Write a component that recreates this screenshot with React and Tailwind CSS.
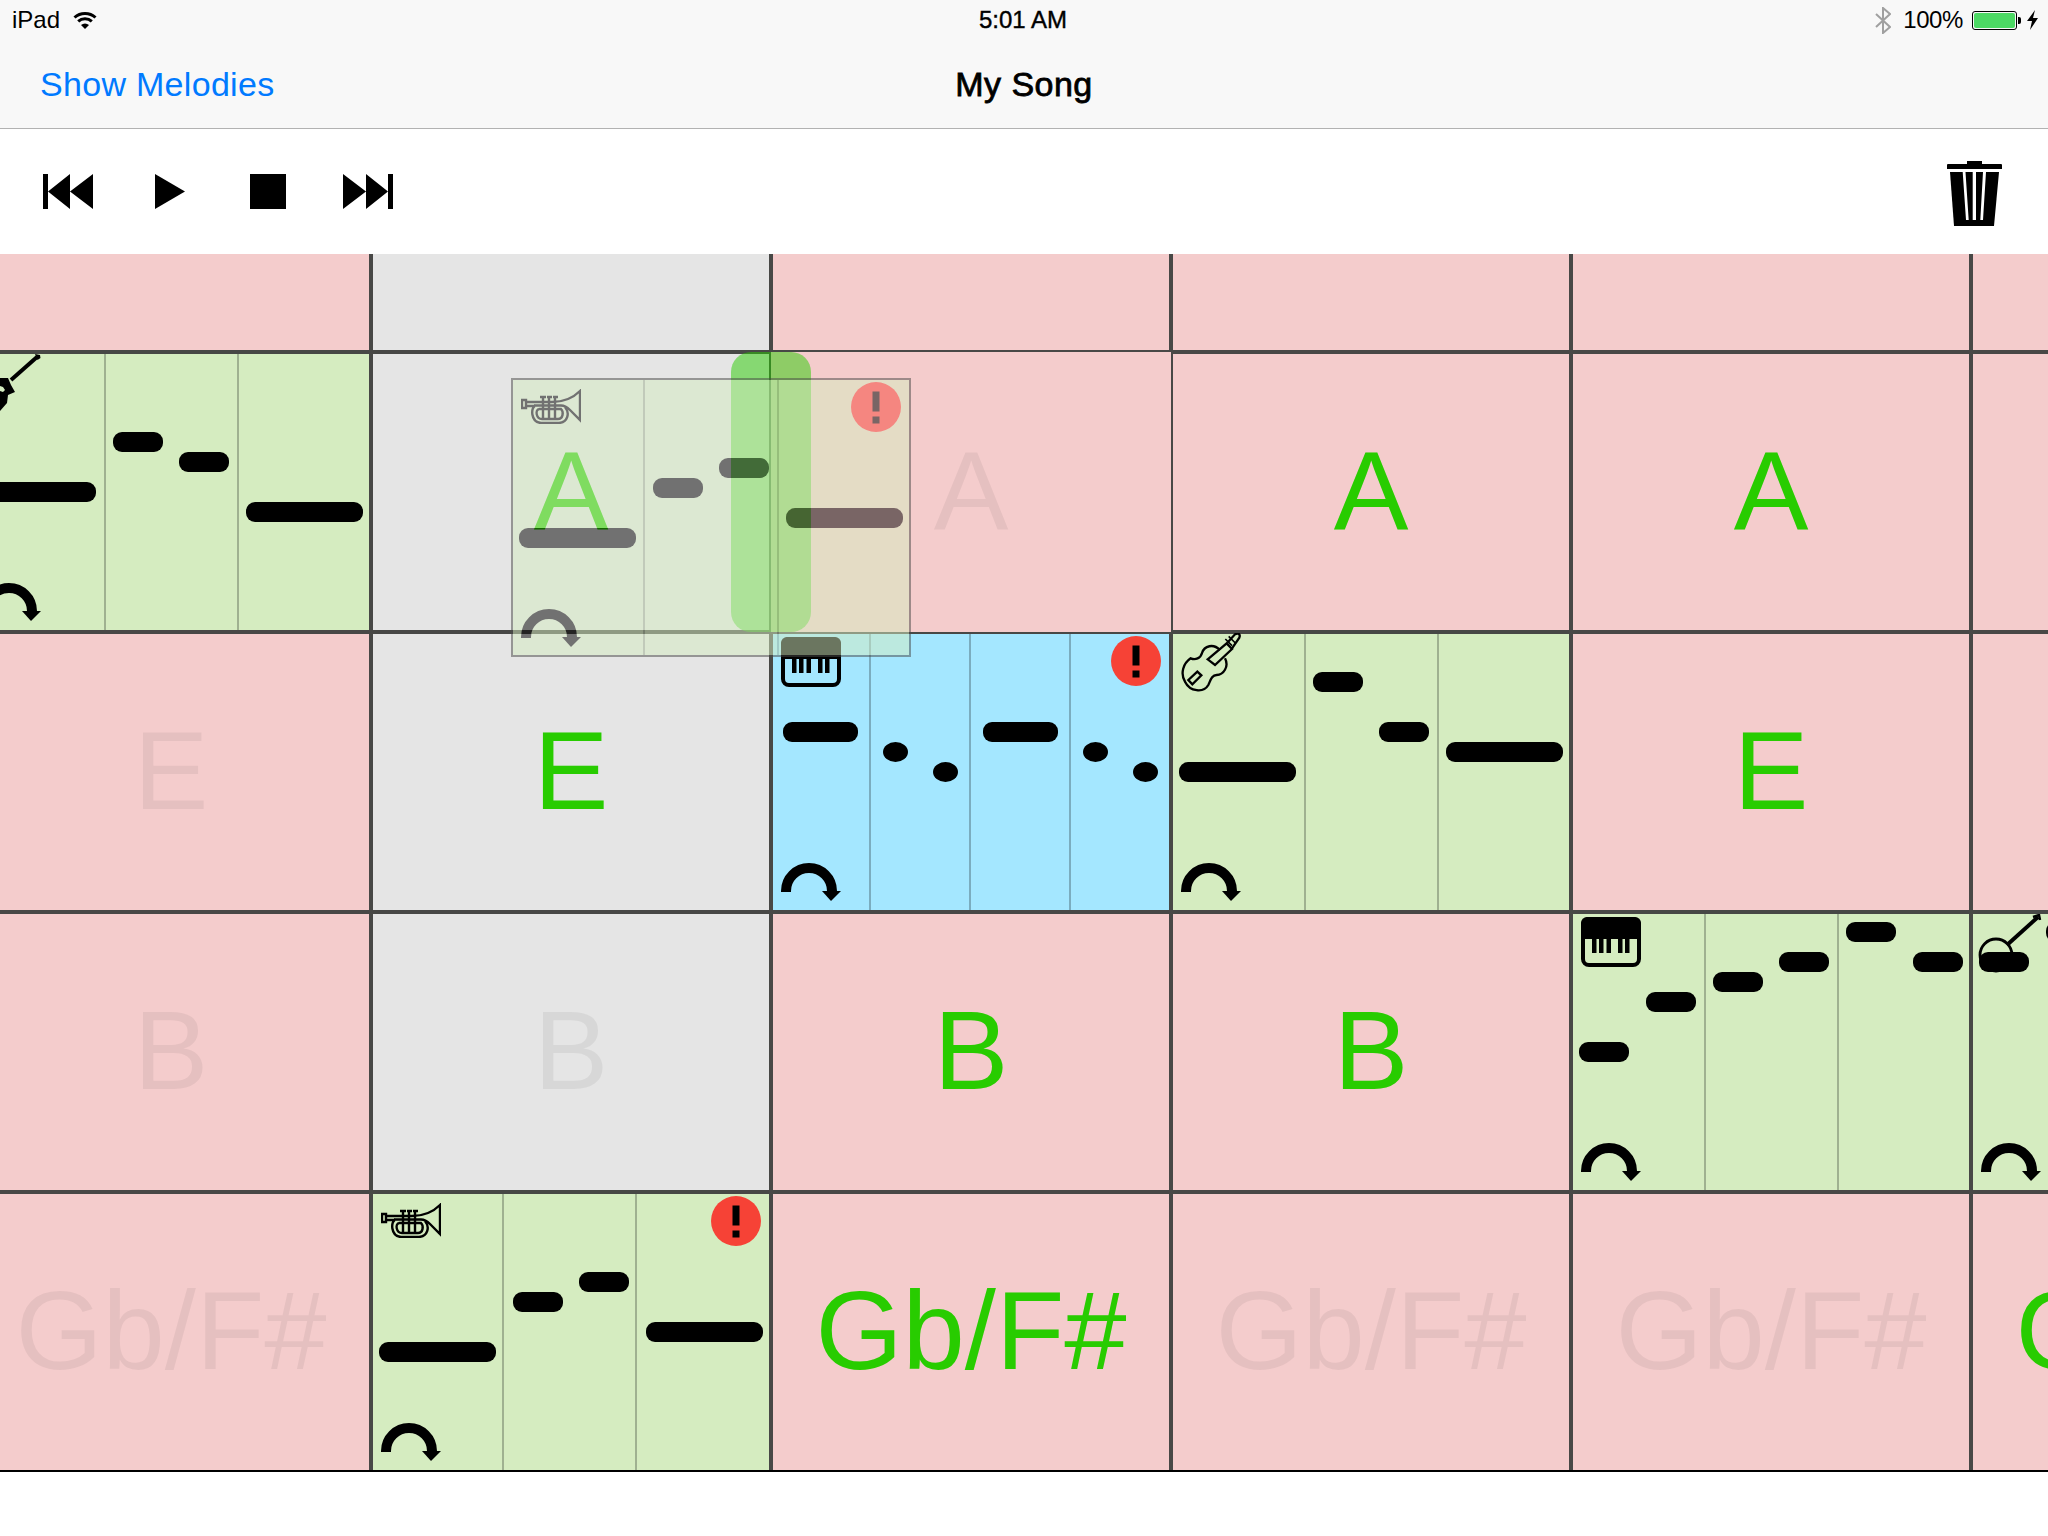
const NOTE_TOP = 'absolute h-5 bg-black';

const bgs = {
  pink: 'bg-[#f4cccc]',
  gray: 'bg-[#e5e5e5]',
  green: 'bg-[#d5ecc0]',
  blue: 'bg-[#a4e7ff]',
};

const THREE = [131, 264];
const FOUR = [96, 196, 296];

function Trumpet() {
  return (
    <svg className="absolute left-2 top-[9px]" width="60" height="35" viewBox="0 0 60 35" fill="none" stroke="currentColor" strokeWidth="2.400">
      <path d="M1 11h4v8H1z" />
      <path d="M5 13H31C41 13 51 10 59 2V31L49 21C46 18 43 16.500 40 16.500H13" />
      <path d="M5 17H14C10 18 9 33 20 34H38C47 33 49 24 44 18" />
      <path d="M18 20C14 21 15 30 21 30H37C42 30 43 23 40 20H18" />
      <path d="M22 8V31M28 8V31M34 8V31M19 8h6M26 8h5M32 8h5" />
    </svg>
  );
}

function Violin() {
  return (
    <svg className="absolute left-2 top-[-1px]" width="60" height="60" viewBox="33 24 180 180" fill="none" stroke="currentColor" strokeWidth="7">
      <path d="M150 75C130 55 103 62 96 84C92 100 76 106 62 100C40 115 30 145 45 170C60 200 100 205 115 180C122 165 125 150 140 150C160 150 178 125 165 100" />
      <path d="M113 103L170 55L186 72L135 120Z" />
      <path d="M172 53L195 28C205 22 212 28 208 38L186 70" />
      <path d="M166 42L186 62M176 34L196 54" strokeWidth="5" />
      <path d="M55 165L82 140L94 151L67 178Z" />
    </svg>
  );
}

function Piano() {
  return (
    <svg className="absolute left-2 top-[3px]" width="60" height="50" viewBox="0 0 60 50">
      <rect x="2" y="2" width="56" height="46" rx="6" fill="none" stroke="#000" strokeWidth="4" />
      <path d="M6 0H54A6 6 0 0 1 60 6V22H0V6A6 6 0 0 1 6 0Z" fill="#000" />
      <path d="M11 22h4.500v14H11zM18 22h4.500v14H18zM25.500 22h4.500v14h-4.500zM37 22h4.500v14H37zM44 22h4.500v14H44z" fill="#000" />
    </svg>
  );
}

function Banjo() {
  return (
    <svg className="absolute left-0 top-0" width="75" height="60" viewBox="0 0 75 60" fill="none" stroke="#000">
      <circle cx="23" cy="41" r="16" strokeWidth="2.800" />
      <path d="M34 31L65 3" strokeWidth="4" />
      <path d="M60 3l6-2 1 5" strokeWidth="2.500" />
    </svg>
  );
}

function Guitar() {
  return (
    <svg className="absolute left-0 top-0" width="75" height="60" viewBox="0 0 75 60">
      <path d="M38 26L64 3" stroke="#000" strokeWidth="4" fill="none" />
      <path d="M62 0l5 1 .500 3-3 2z" fill="#000" />
      <path fillRule="evenodd" d="M10 30L27 24H35L38 31L42 38L35 41L34 49L27 57L10 50ZM27 32L30 33L32 36L30 38L27 37Z" fill="#000" />
    </svg>
  );
}

function Repeat() {
  return (
    <svg className="absolute left-2 top-[229px]" width="60" height="38" viewBox="0 0 60 38">
      <path d="M5 29V28A23 23 0 0 1 51 28V29" fill="none" stroke="#000" strokeWidth="10" />
      <path d="M41 28H60L50 38Z" fill="#000" />
    </svg>
  );
}

function Warning() {
  return (
    <svg className="absolute left-[338px] top-[2px]" width="50" height="50" viewBox="0 0 50 50">
      <circle cx="25" cy="25" r="25" fill="#f64236" />
      <rect x="21.500" y="9.500" width="7" height="20" fill="#000" />
      <rect x="21.500" y="34.500" width="7" height="7" fill="#000" />
    </svg>
  );
}

const icons = { trumpet: Trumpet, violin: Violin, piano: Piano, banjo: Banjo, guitar: Guitar };

function SectionBody({ icon, notes, dividers, warn }) {
  const Icon = icons[icon];
  return (
    <>
      {dividers.map((x) => (
        <div key={x} className="absolute top-0 bottom-0 w-[2px] bg-black/25" style={{ left: x }} />
      ))}
      <Icon />
      {warn && <Warning />}
      <Repeat />
      {notes.map(([x, y, w], i) => (
        <div key={i} className={NOTE_TOP} style={{ left: x, top: y, width: w, borderRadius: w < 30 ? '50%' : 9 }} />
      ))}
    </>
  );
}

const sections = {
  guitar: { bg: 'green', icon: 'guitar', dividers: THREE, notes: [[6, 128, 117], [140, 78, 50], [206, 98, 50], [273, 148, 117]] },
  keysBlue: {
    bg: 'blue', icon: 'piano', dividers: FOUR, warn: true,
    notes: [[10, 88, 75], [110, 108, 25], [160, 128, 25], [210, 88, 75], [310, 108, 25], [360, 128, 25]],
  },
  violin: { bg: 'green', icon: 'violin', dividers: THREE, notes: [[6, 128, 117], [140, 38, 50], [206, 88, 50], [273, 108, 117]] },
  keys: {
    bg: 'green', icon: 'piano', dividers: THREE,
    notes: [[6, 128, 50], [73, 78, 50], [140, 58, 50], [206, 38, 50], [273, 8, 50], [340, 38, 50]],
  },
  banjo: { bg: 'green', icon: 'banjo', dividers: THREE, notes: [[6, 38, 50], [73, 8, 50]] },
  trumpet: { bg: 'green', icon: 'trumpet', dividers: [129, 262], warn: true, notes: [[6, 148, 117], [140, 98, 50], [206, 78, 50], [273, 128, 117]] },
};

// label tuple: [background, chord, lit]
const grid = [
  [['pink'], ['gray'], ['pink'], ['pink'], ['pink'], ['pink']],
  [sections.guitar, ['gray', 'A', true], ['pink', 'A', false, true], ['pink', 'A', true], ['pink', 'A', true], ['pink']],
  [['pink', 'E'], ['gray', 'E', true], sections.keysBlue, sections.violin, ['pink', 'E', true], ['pink']],
  [['pink', 'B'], ['gray', 'B'], ['pink', 'B', true], ['pink', 'B', true], sections.keys, sections.banjo],
  [['pink', 'Gb/F#'], sections.trumpet, ['pink', 'Gb/F#', true], ['pink', 'Gb/F#'], ['pink', 'Gb/F#'], ['pink', 'Gb/F#', true]],
];

function Cell({ cell, last }) {
  const edge = last ? 'border-r-4 border-[#484846]' : 'border-r-4 border-b-4 border-[#484846]';
  if (!Array.isArray(cell)) {
    return (
      <div className={`relative ${edge} ${bgs[cell.bg]}`}>
        <SectionBody {...cell} />
      </div>
    );
  }
  const [bg, label, lit, lifted] = cell;
  return (
    <div className={`relative flex items-center justify-center pb-[2px] ${edge} ${bgs[bg]}`}>
      {lifted && <div className="absolute -inset-[2px] bg-[#f4cccc]" />}
      {label && (
        <span className={`relative whitespace-nowrap text-[112px] leading-[110px] ${lit ? 'text-[#28cc00]' : 'text-black/6'}`}>
          {label}
        </span>
      )}
    </div>
  );
}

function StatusBar() {
  return (
    <div className="flex h-10 items-center justify-between pl-3 pr-[10px] text-2xl leading-none text-black">
      <div className="flex w-[400px] items-center gap-[13px]">
        <span>iPad</span>
        <svg width="24" height="18" viewBox="0 0 24 18" fill="none" stroke="#000">
          <path d="M1.500 6.500A15.500 15.500 0 0 1 22.500 6.500" strokeWidth="3" />
          <path d="M5.200 10.400A10 10 0 0 1 18.800 10.400" strokeWidth="3" />
          <path d="M8 14A6 6 0 0 1 16 14L12 18Z" fill="#000" stroke="none" />
        </svg>
      </div>
      <span className="ml-[-4px] [-webkit-text-stroke:0.4px_#000]">5:01 AM</span>
      <div className="flex w-[400px] items-center justify-end">
        <svg width="16" height="27" viewBox="0 0 16 27" fill="none" stroke="#a0a0a0" strokeWidth="2">
          <path d="M1 7L15 20L8 26V1L15 7L1 20" />
        </svg>
        <span className="ml-3 tracking-[-0.4px]">100%</span>
        <div className="ml-[9px] flex items-center">
          <div className="h-[19px] w-[45px] rounded-[3px] border border-black p-[1px]">
            <div className="h-full w-full rounded-[2px] bg-[#4cd964]" />
          </div>
          <div className="ml-[1px] h-[7px] w-[3px] rounded-r-[2px] bg-black" />
        </div>
        <svg className="ml-[6px]" width="11" height="20" viewBox="0 0 11 20">
          <path d="M8 0L0 11H5L3 20L11 8H6Z" fill="#000" />
        </svg>
      </div>
    </div>
  );
}

function Transport() {
  return (
    <div className="flex h-[125px] items-center justify-between pl-[43px] pr-[46px]">
      <div className="flex items-center">
        <svg width="50" height="35" viewBox="0 0 50 35">
          <path d="M0 0H5V35H0ZM5 17.500L27 0V35ZM27 17.500L50 0V35Z" fill="#000" />
        </svg>
        <svg className="ml-[62px]" width="30" height="35" viewBox="0 0 30 35">
          <path d="M0 0L30 17.500L0 35Z" fill="#000" />
        </svg>
        <div className="ml-[65px] h-[35px] w-9 bg-black" />
        <svg className="ml-[57px]" width="50" height="35" viewBox="0 0 50 35">
          <path d="M50 0H45V35H50ZM45 17.500L23 0V35ZM23 17.500L0 0V35Z" fill="#000" />
        </svg>
      </div>
      <svg className="mt-1" width="55" height="65" viewBox="0 0 55 65">
        <path d="M20 0H35V3H54A1 1 0 0 1 55 4V8H0V4A1 1 0 0 1 1 3H20Z" fill="#000" />
        <path d="M3 11H52L47 65H7Z" fill="#000" />
        <path d="M15.700 11H18.500L21.700 59H19ZM25.700 11H29V59H25.700ZM36 11H39L36 59H33.300Z" fill="#fff" />
      </svg>
    </div>
  );
}

export default function App() {
  return (
    <div className="h-[1536px] w-[2048px] overflow-hidden bg-white font-['Liberation_Sans',Arial,sans-serif]">
      <div className="border-b border-[#b2b2b2] bg-[#f8f8f8]">
        <StatusBar />
        <div className="relative flex h-[88px] items-center pl-10">
          <span className="text-[34px] leading-none tracking-[0.3px] text-[#007aff]">Show Melodies</span>
          <span className="absolute inset-x-0 top-[27px] text-center text-[34px] leading-none tracking-[0.45px] text-black [-webkit-text-stroke:0.8px_#000]">My Song</span>
        </div>
      </div>
      <Transport />

      <div className="relative overflow-hidden border-b-2 border-black">
        <div className="ml-[-27px] grid w-[2400px] grid-cols-[repeat(6,400px)] grid-rows-[100px_280px_280px_280px_276px]">
          {grid.map((row, r) => row.map((cell, c) => <Cell key={`${r}-${c}`} cell={cell} last={r === grid.length - 1} />))}
        </div>
        {/* playhead sits under the section being dragged */}
        <div className="absolute left-[731px] top-[98px] h-[280px] w-20 rounded-[20px] bg-[#28cc00]/50" />
        <div className="absolute left-[511px] top-[124px] h-[279px] w-[400px] border-2 border-[#484846] bg-[#d5ecc0] opacity-50">
          <SectionBody {...sections.trumpet} dividers={[130, 264]} />
        </div>
      </div>
    </div>
  );
}
